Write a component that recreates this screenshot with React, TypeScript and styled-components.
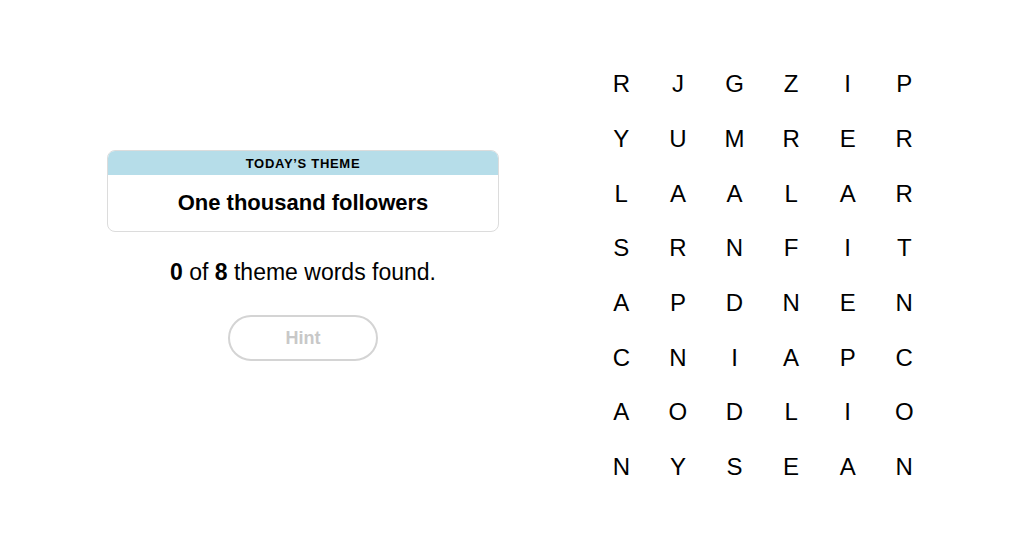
import React from "react";
import styled, { createGlobalStyle } from "styled-components";

const GlobalStyle = createGlobalStyle`
  html, body { margin: 0; padding: 0; background: #fff; }
  body { font-family: "Liberation Sans", Arial, sans-serif; color: #000; }
`;

const Page = styled.div`
  display: flex;
  align-items: flex-start;
  width: 1024px;
  height: 539px;
  overflow: hidden;
`;

const LeftPanel = styled.div`
  display: flex;
  flex-direction: column;
  align-items: center;
  width: 392px;
  margin-left: 107px;
  padding-top: 150px;
`;

const ThemeCard = styled.div`
  width: 100%;
  box-sizing: border-box;
  border: 1px solid #dcdcdc;
  border-radius: 8px;
  overflow: hidden;
`;

const ThemeHeader = styled.div`
  height: 24px;
  display: flex;
  align-items: center;
  justify-content: center;
  background: #b6dde9;
  font-size: 13px;
  font-weight: 700;
  letter-spacing: 0.7px;
  text-transform: uppercase;
`;

const ThemeBody = styled.div`
  height: 56px;
  display: flex;
  align-items: center;
  justify-content: center;
  font-size: 22px;
  font-weight: 700;
`;

const Status = styled.p`
  margin: 26px 0 0;
  font-size: 23px;
  line-height: 28px;
  b { font-weight: 700; }
`;

const HintButton = styled.button`
  margin-top: 29px;
  width: 150px;
  height: 46px;
  border: 2px solid #d4d4d4;
  border-radius: 23px;
  background: #fff;
  color: #c8c8c8;
  font-family: inherit;
  font-size: 18px;
  font-weight: 700;
  cursor: default;
`;

const Board = styled.div`
  display: grid;
  grid-template-columns: repeat(6, 56.6px);
  grid-auto-rows: 54.7px;
  margin-left: 94px;
  margin-top: 57px;
`;

const Cell = styled.div`
  display: flex;
  align-items: center;
  justify-content: center;
  font-size: 24px;
  font-weight: 400;
`;

const rows = ["RJGZIP", "YUMRER", "LAALAR", "SRNFIT", "APDNEN", "CNIAPC", "AODLIO", "NYSEAN"];

export default function App() {
  return (
    <Page>
      <GlobalStyle />
      <LeftPanel>
        <ThemeCard>
          <ThemeHeader>Today’s theme</ThemeHeader>
          <ThemeBody>One thousand followers</ThemeBody>
        </ThemeCard>
        <Status>
          <b>0</b> of <b>8</b> theme words found.
        </Status>
        <HintButton>Hint</HintButton>
      </LeftPanel>
      <Board>
        {rows.flatMap((row, r) =>
          row.split("").map((ch, c) => <Cell key={`${r}-${c}`}>{ch}</Cell>)
        )}
      </Board>
    </Page>
  );
}
